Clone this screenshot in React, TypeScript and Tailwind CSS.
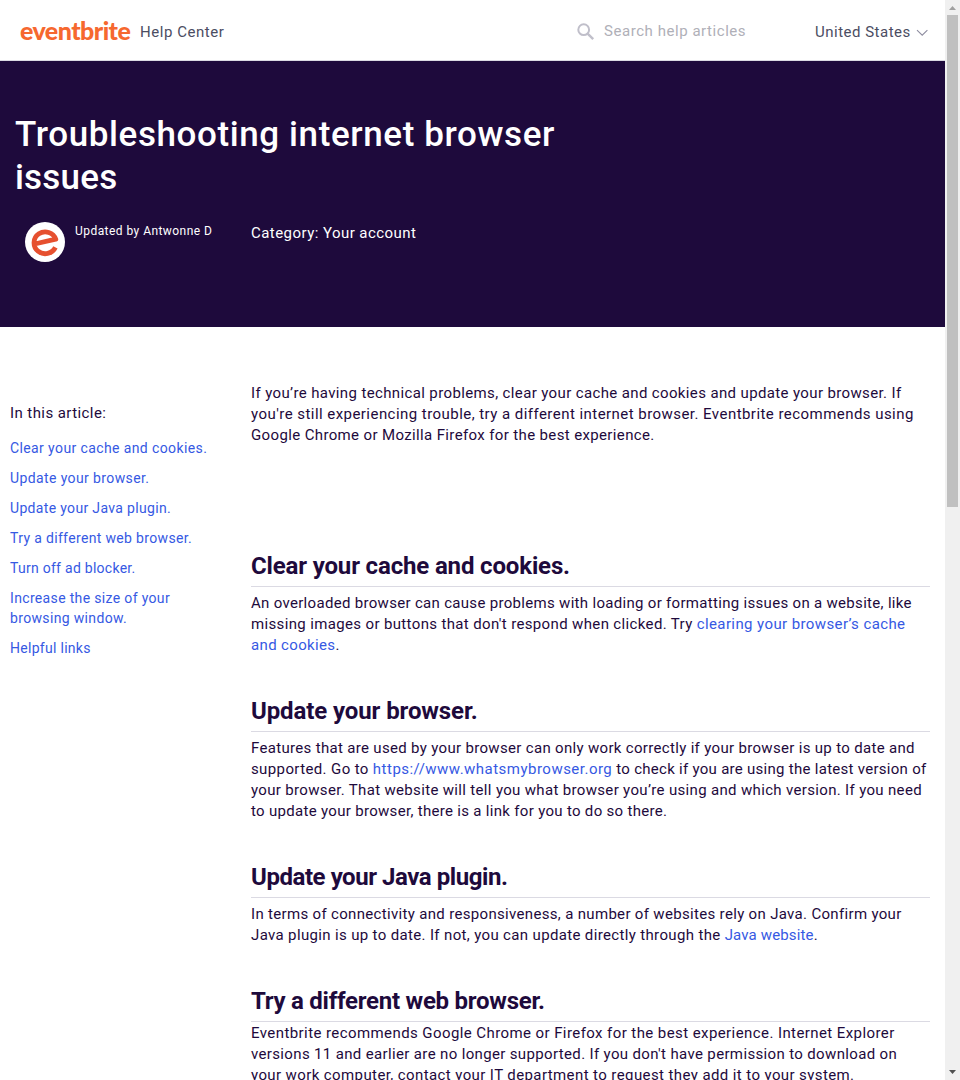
import type { ReactNode } from "react";

function Line({ t = "tracking-[0.45px]", children }: { t?: string; children: ReactNode }) {
  return (
    <div className="whitespace-nowrap">
      <span className={t}>{children}</span>
    </div>
  );
}

function Link({ t = "", children }: { t?: string; children: ReactNode }) {
  return (
    <a href="#" className={`text-[#3659e3] ${t}`}>
      {children}
    </a>
  );
}

function Heading({ gap = "pt-[40px]", t = "tracking-[0px]", children }: { gap?: string; t?: string; children: ReactNode }) {
  return (
    <div className={gap}>
      <h2 className="h-[36px] box-border border-b border-[#dbdae3] whitespace-nowrap text-[24px] font-bold leading-[30px]">
        <span className={t}>{children}</span>
      </h2>
    </div>
  );
}

function Header() {
  return (
    <header className="flex h-[61px] shrink-0 items-center border-b border-[#dbdae3] bg-white text-[15px] text-[#4b4d63]">
      <div className="w-[120px] shrink-0 whitespace-nowrap pl-[20px] font-[Lato] text-[25px] font-black leading-[58px] pb-px text-[#f6682f]">
        <span className="tracking-[-0.55px]">eventbrite</span>
      </div>
      <div className="ml-5 w-[437px] whitespace-nowrap pt-[5px]">
        <span className="tracking-[0.54px]">Help Center</span>
      </div>
      <svg width="18" height="18" viewBox="0 0 18 18" className="mt-[3px] shrink-0" fill="none" stroke="#c0bfca" strokeWidth="2">
        <circle cx="6.7" cy="6.7" r="5.4" />
        <path d="M10.6 10.6 L16.2 16.2" strokeWidth="2.4" />
      </svg>
      <div className="ml-[9px] w-[211px] whitespace-nowrap pt-[3px] text-[#b0b0b8]">
        <span className="tracking-[0.55px]">Search help articles</span>
      </div>
      <div className="w-[101px] whitespace-nowrap pt-[5px]">
        <span className="tracking-[0.5px]">United States</span>
      </div>
      <svg width="12" height="8" viewBox="0 0 12 8" className="mt-[5px] shrink-0" fill="none" stroke="#8e8da0" strokeWidth="1.1">
        <path d="M1 1.2 L6.2 6.2 L11.4 1.2" />
      </svg>
    </header>
  );
}

function Hero() {
  return (
    <section className="h-[266px] shrink-0 bg-[#1e0a3c] pt-[52px] text-white">
      <h1 className="pl-[15px] text-[35px] font-medium leading-[43px]">
        <Line t="tracking-[0.6px]">Troubleshooting internet browser</Line>
        <Line t="tracking-[0.2px]">issues</Line>
      </h1>
      <div className="mt-[23px] flex pl-[25px]">
        <svg width="40" height="40" viewBox="0 0 40 40" className="shrink-0">
          <circle cx="20" cy="20" r="20" fill="#fff" />
          <g fill="none" stroke="#e6502f" strokeWidth="4.8">
            <path d="M30.4 25.4 A11.2 10.9 0 1 1 30.8 17.2 L9.5 22" strokeLinejoin="round" />
          </g>
        </svg>
        <div className="ml-[10px] w-[176px] text-[12px] leading-[18px]">
          <Line>Updated by Antwonne D</Line>
        </div>
        <div className="text-[15px] leading-[22px]">
          <Line>Category: Your account</Line>
        </div>
      </div>
    </section>
  );
}

function Sidebar() {
  return (
    <nav className="w-[251px] shrink-0 pl-[10px] pt-[20px]">
      <div className="leading-[21px]">
        <Line t="tracking-[0.42px]">In this article:</Line>
      </div>
      <ul className="mt-[14px] flex flex-col gap-[10px] text-[14px] leading-5 text-[#3659e3]">
        <li><Line t="tracking-[0.39px]">Clear your cache and cookies.</Line></li>
        <li><Line t="tracking-[0.39px]">Update your browser.</Line></li>
        <li><Line t="tracking-[0.33px]">Update your Java plugin.</Line></li>
        <li><Line t="tracking-[0.34px]">Try a different web browser.</Line></li>
        <li><Line t="tracking-[0.27px]">Turn off ad blocker.</Line></li>
        <li>
          <Line t="tracking-[0.34px]">Increase the size of your</Line>
          <Line t="tracking-[0.34px]">browsing window.</Line>
        </li>
        <li><Line t="tracking-[0.29px]">Helpful links</Line></li>
      </ul>
    </nav>
  );
}

function Article() {
  return (
    <article className="w-[679px] leading-[21px]">
      <Line t="tracking-[0.37px]">If you’re having technical problems, clear your cache and cookies and update your browser. If</Line>
      <Line t="tracking-[0.453px]">you're still experiencing trouble, try a different internet browser. Eventbrite recommends using</Line>
      <Line t="tracking-[0.365px]">Google Chrome or Mozilla Firefox for the best experience.</Line>

      <Heading gap="pt-[105px]" t="tracking-[-0.15px]">Clear your cache and cookies.</Heading>
      <div className="pt-[6px]">
        <Line t="tracking-[0.31px]">An overloaded browser can cause problems with loading or formatting issues on a website, like</Line>
        <Line t="tracking-[0.357px]">missing images or buttons that don't respond when clicked. Try <Link t="tracking-[0.4px]">clearing your browser’s cache</Link></Line>
        <Line t="tracking-[0.35px]"><Link>and cookies</Link>.</Line>
      </div>

      <Heading t="tracking-[-0.1px]">Update your browser.</Heading>
      <div className="pt-[6px]">
        <Line t="tracking-[0.323px]">Features that are used by your browser can only work correctly if your browser is up to date and</Line>
        <Line t="tracking-[0.28px]"><span className="tracking-[0.38px]">supported. Go to </span><Link t="tracking-[0.48px]">https://www.whatsmybrowser.org</Link> to check if you are using the latest version of</Line>
        <Line t="tracking-[0.335px]">your browser. That website will tell you what browser you’re using and which version. If you need</Line>
        <Line t="tracking-[0.31px]">to update your browser, there is a link for you to do so there.</Line>
      </div>

      <Heading t="tracking-[-0.44px]">Update your Java plugin.</Heading>
      <div className="pt-[6px]">
        <Line t="tracking-[0.325px]">In terms of connectivity and responsiveness, a number of websites rely on Java. Confirm your</Line>
        <Line t="tracking-[0.35px]">Java plugin is up to date. If not, you can update directly through the <Link t="tracking-[0.15px]">Java website</Link>.</Line>
      </div>

      <Heading t="tracking-[-0.26px]">Try a different web browser.</Heading>
      <div className="pt-px">
        <Line t="tracking-[0.416px]">Eventbrite recommends Google Chrome or Firefox for the best experience. Internet Explorer</Line>
        <Line t="tracking-[0.353px]">versions 11 and earlier are no longer supported. If you don't have permission to download on</Line>
        <Line t="tracking-[0.4px]">your work computer, contact your IT department to request they add it to your system.</Line>
      </div>
    </article>
  );
}

function Scrollbar() {
  return (
    <div className="flex w-[15px] shrink-0 flex-col items-center bg-[#f0f0f0]">
      <svg width="15" height="15" viewBox="0 0 15 15" className="shrink-0">
        <path d="M4 10 L7.5 6 L11 10 Z" fill="#a0a0a0" />
      </svg>
      <div className="ml-px mr-[2px] h-[492px] w-[11px] bg-[#c0c0c0]" />
      <svg width="15" height="15" viewBox="0 0 15 15" className="mt-auto shrink-0">
        <path d="M4 5 L11 5 L7.5 9 Z" fill="#505050" />
      </svg>
    </div>
  );
}

export default function App() {
  return (
    <div className="flex h-[1080px] w-[960px] overflow-hidden bg-white font-[Roboto,sans-serif] text-[15px] text-[#1e0a3c]">
      <div className="flex w-[945px] shrink-0 flex-col overflow-hidden">
        <Header />
        <Hero />
        <main className="flex min-h-0 flex-1 overflow-hidden pt-[56px]">
          <Sidebar />
          <Article />
        </main>
      </div>
      <Scrollbar />
    </div>
  );
}
